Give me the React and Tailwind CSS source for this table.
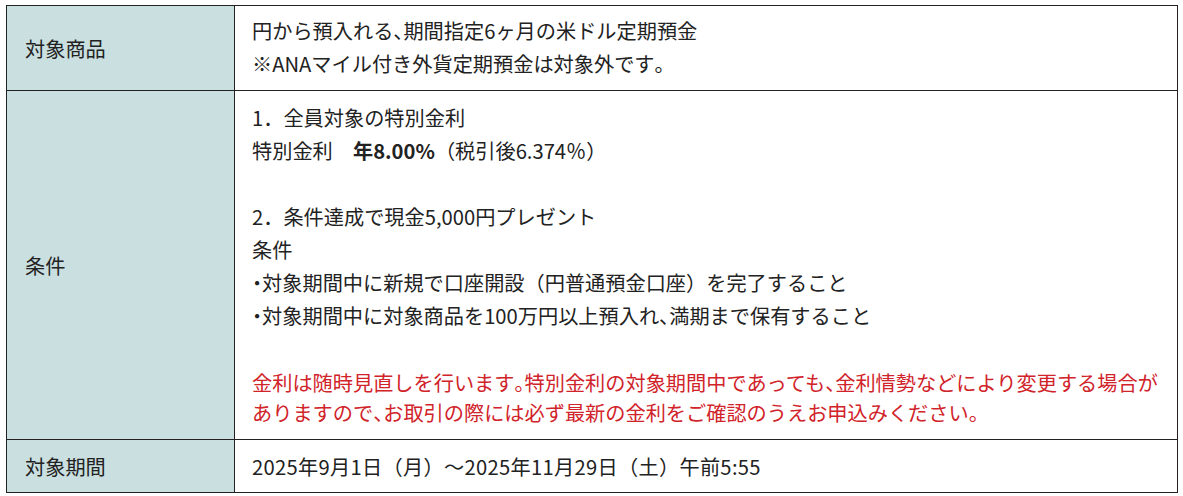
const font = { fontFamily: '"Noto Sans CJK JP", "Noto Sans", sans-serif' }

// 句読点と中黒だけ半角幅に詰める
const T = ({ children }) =>
    String(children)
        .split(/([、。・])/)
        .map((part, i) =>
            part === '、' || part === '。' || part === '・' ? (
                <span key={i} className="[font-feature-settings:'halt']">{part}</span>
            ) : (
                part
            )
        )

const Row = ({ label, children, last }) => (
    <div className={`flex ${last ? '' : 'border-b border-[#222]'}`}>
        <div className="w-[228px] shrink-0 bg-[#cadfe0] border-r border-[#222] flex items-center pl-[18px]">
            {label}
        </div>
        <div className="flex-1 pl-[17px] pr-2">{children}</div>
    </div>
)

export default function App() {
    return (
        <div className="bg-white w-[1183px] h-[496px] pt-[5px] pl-[6px]" style={font}>
            <div className="w-[1172px] border border-[#222] text-[20.2px] leading-[33px] text-[#222]">
                <Row label="対象商品">
                    <div className="pt-[8px] pb-[10px]">
                        <p><T>円から預入れる、期間指定6ヶ月の米ドル定期預金</T></p>
                        <p><T>※ANAマイル付き外貨定期預金は対象外です。</T></p>
                    </div>
                </Row>
                <Row label="条件">
                    <div className="pt-[10px] pb-[11px]">
                        <p>1．全員対象の特別金利</p>
                        <p>
                            特別金利　<span className="font-bold">年8.00%</span>（税引後6.374％）
                        </p>
                        <p>&nbsp;</p>
                        <p>2．条件達成で現金5,000円プレゼント</p>
                        <p>条件</p>
                        <p><T>・対象期間中に新規で口座開設（円普通預金口座）を完了すること</T></p>
                        <p><T>・対象期間中に対象商品を100万円以上預入れ、満期まで保有すること</T></p>
                        <p>&nbsp;</p>
                        <p className="text-[#d1232a] leading-[30px] mt-[3px]">
                            <T>金利は随時見直しを行います。特別金利の対象期間中であっても、金利情勢などにより変更する場合が</T>
                            <br />
                            <T>ありますので、お取引の際には必ず最新の金利をご確認のうえお申込みください。</T>
                        </p>
                    </div>
                </Row>
                <Row label="対象期間" last>
                    <div className="pt-[10px] pb-[9px]">
                        <p className="tracking-[0.3px]">2025年9月1日（月）〜2025年11月29日（土）午前5:55</p>
                    </div>
                </Row>
            </div>
        </div>
    )
}
